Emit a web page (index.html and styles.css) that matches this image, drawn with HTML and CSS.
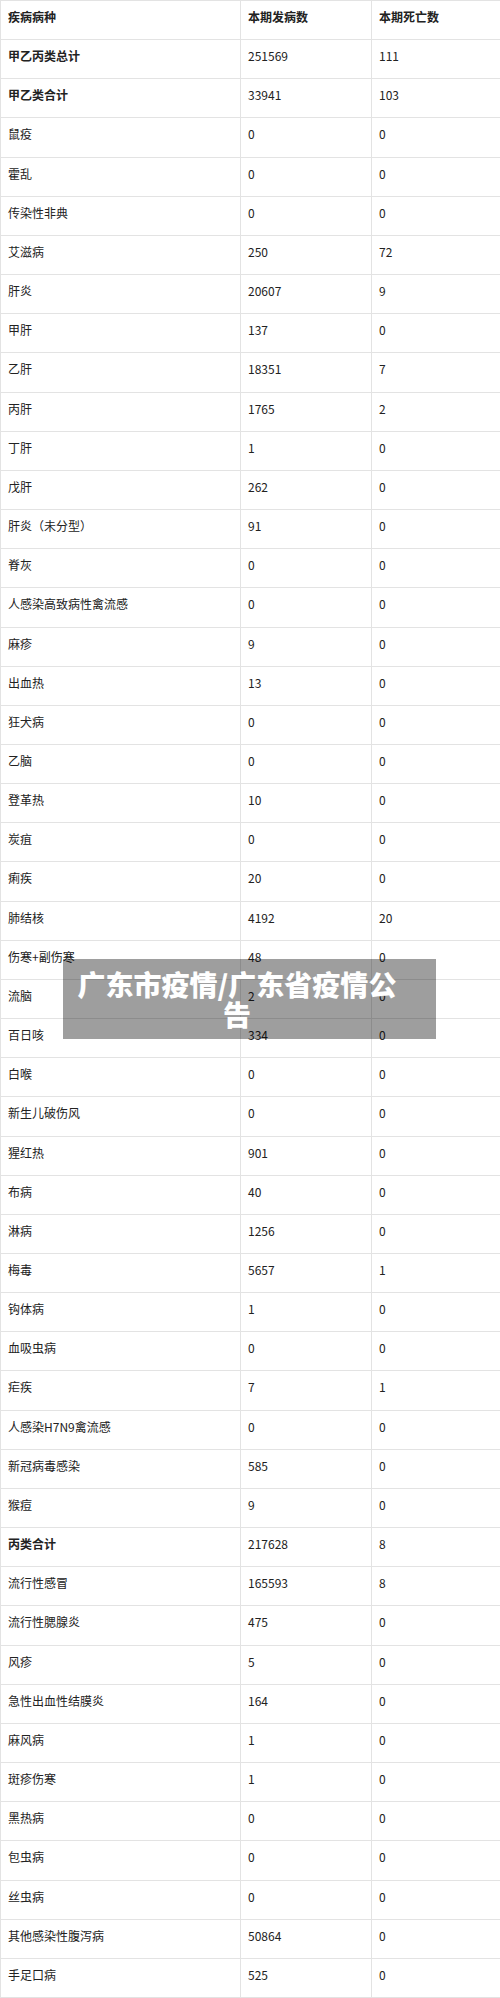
FILE: index.html
```html
<!DOCTYPE html>
<html lang="zh-CN">
<head>
<meta charset="utf-8">
<title>广东市疫情/广东省疫情公告</title>
<link rel="stylesheet" href="styles.css">
</head>
<body>
<div class="page">
<table class="data">
<colgroup><col class="c1"><col class="c2"><col class="c3"></colgroup>
<tbody>
<tr class="head"><td>疾病病种</td><td>本期发病数</td><td>本期死亡数</td></tr>
<tr class="b"><td>甲乙丙类总计</td><td>251569</td><td>111</td></tr>
<tr class="b"><td>甲乙类合计</td><td>33941</td><td>103</td></tr>
<tr><td>鼠疫</td><td>0</td><td>0</td></tr>
<tr><td>霍乱</td><td>0</td><td>0</td></tr>
<tr><td>传染性非典</td><td>0</td><td>0</td></tr>
<tr><td>艾滋病</td><td>250</td><td>72</td></tr>
<tr><td>肝炎</td><td>20607</td><td>9</td></tr>
<tr><td>甲肝</td><td>137</td><td>0</td></tr>
<tr><td>乙肝</td><td>18351</td><td>7</td></tr>
<tr><td>丙肝</td><td>1765</td><td>2</td></tr>
<tr><td>丁肝</td><td>1</td><td>0</td></tr>
<tr><td>戊肝</td><td>262</td><td>0</td></tr>
<tr><td>肝炎（未分型）</td><td>91</td><td>0</td></tr>
<tr><td>脊灰</td><td>0</td><td>0</td></tr>
<tr><td>人感染高致病性禽流感</td><td>0</td><td>0</td></tr>
<tr><td>麻疹</td><td>9</td><td>0</td></tr>
<tr><td>出血热</td><td>13</td><td>0</td></tr>
<tr><td>狂犬病</td><td>0</td><td>0</td></tr>
<tr><td>乙脑</td><td>0</td><td>0</td></tr>
<tr><td>登革热</td><td>10</td><td>0</td></tr>
<tr><td>炭疽</td><td>0</td><td>0</td></tr>
<tr><td>痢疾</td><td>20</td><td>0</td></tr>
<tr><td>肺结核</td><td>4192</td><td>20</td></tr>
<tr><td>伤寒+副伤寒</td><td>48</td><td>0</td></tr>
<tr><td>流脑</td><td>2</td><td>0</td></tr>
<tr><td>百日咳</td><td>334</td><td>0</td></tr>
<tr><td>白喉</td><td>0</td><td>0</td></tr>
<tr><td>新生儿破伤风</td><td>0</td><td>0</td></tr>
<tr><td>猩红热</td><td>901</td><td>0</td></tr>
<tr><td>布病</td><td>40</td><td>0</td></tr>
<tr><td>淋病</td><td>1256</td><td>0</td></tr>
<tr><td>梅毒</td><td>5657</td><td>1</td></tr>
<tr><td>钩体病</td><td>1</td><td>0</td></tr>
<tr><td>血吸虫病</td><td>0</td><td>0</td></tr>
<tr><td>疟疾</td><td>7</td><td>1</td></tr>
<tr><td>人感染H7N9禽流感</td><td>0</td><td>0</td></tr>
<tr><td>新冠病毒感染</td><td>585</td><td>0</td></tr>
<tr><td>猴痘</td><td>9</td><td>0</td></tr>
<tr class="b"><td>丙类合计</td><td>217628</td><td>8</td></tr>
<tr><td>流行性感冒</td><td>165593</td><td>8</td></tr>
<tr><td>流行性腮腺炎</td><td>475</td><td>0</td></tr>
<tr><td>风疹</td><td>5</td><td>0</td></tr>
<tr><td>急性出血性结膜炎</td><td>164</td><td>0</td></tr>
<tr><td>麻风病</td><td>1</td><td>0</td></tr>
<tr><td>斑疹伤寒</td><td>1</td><td>0</td></tr>
<tr><td>黑热病</td><td>0</td><td>0</td></tr>
<tr><td>包虫病</td><td>0</td><td>0</td></tr>
<tr><td>丝虫病</td><td>0</td><td>0</td></tr>
<tr><td>其他感染性腹泻病</td><td>50864</td><td>0</td></tr>
<tr><td>手足口病</td><td>525</td><td>0</td></tr>
</tbody>
</table>
<div class="banner">广东市疫情/广东省疫情公告</div>
</div>
</body>
</html>
```
FILE: styles.css
```css
html, body {
  margin: 0;
  padding: 0;
  background: #fff;
}
.page {
  position: relative;
  width: 500px;
  font-family: "Noto Sans CJK SC", "Noto Sans", sans-serif;
  color: #222;
}
.data {
  width: 500px;
  border-collapse: collapse;
  table-layout: fixed;
}
.c1 { width: 240px; }
.c2 { width: 131px; }
.c3 { width: 129px; }
.data td {
  border: 1px solid #e3e3e3;
  height: 39.16px;
  box-sizing: border-box;
  padding: 7px 7px 0 7px;
  vertical-align: top;
  font-size: 12px;
  line-height: 18px;
  white-space: nowrap;
}
.data tr.head td,
.data tr.b td:first-child {
  font-weight: bold;
}
.banner {
  position: absolute;
  left: 63px;
  top: 959px;
  width: 373px;
  box-sizing: border-box;
  padding: 10px 37px 10px 12px;
  background: rgba(0, 0, 0, 0.38);
  color: #fff;
  font-weight: 900;
  font-size: 28px;
  line-height: 30px;
  text-align: center;
  font-family: "Noto Sans CJK SC", sans-serif;
}
```
